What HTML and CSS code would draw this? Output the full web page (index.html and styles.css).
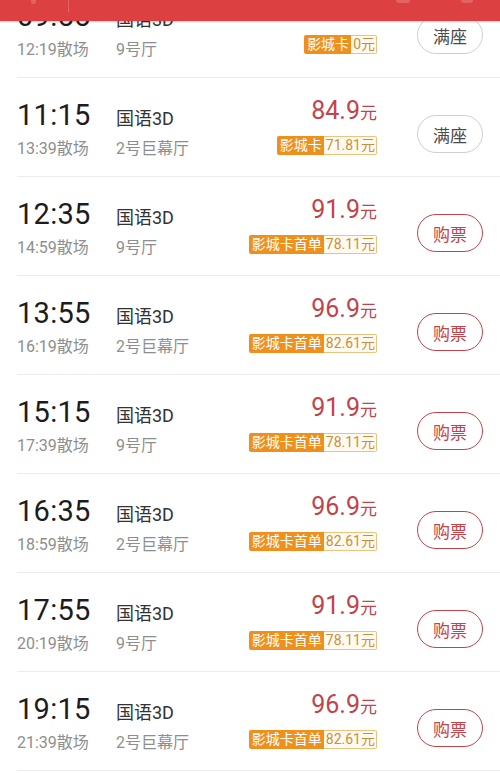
FILE: index.html
```html
<!DOCTYPE html>
<html lang="zh-CN">
<head>
    <meta charset="UTF-8">
    <meta name="viewport" content="width=device-width, initial-scale=1.0">
    <title>选座购票</title>
    <link rel="stylesheet" href="styles.css">
</head>
<body>

<div class="topbar">
    <span class="bar-mark mark-a"></span>
    <span class="bar-line"></span>
    <span class="bar-mark mark-b"></span>
    <span class="bar-mark mark-c"></span>
</div>

<ul class="shows">
    <li class="show">
        <div class="main">
            <span class="start">09:55</span><span class="lang">国语3D</span>
            <span class="end">12:19散场</span><span class="hall">9号厅</span>
        </div>
        <div class="price">
            <p class="amount">&nbsp;</p>
            <p class="card"><span class="card-name">影城卡</span><span class="card-val">0元</span></p>
        </div>
        <button class="btn full">满座</button>
    </li>
    <li class="show">
        <div class="main">
            <span class="start">11:15</span><span class="lang">国语3D</span>
            <span class="end">13:39散场</span><span class="hall">2号巨幕厅</span>
        </div>
        <div class="price">
            <p class="amount">84.9<small>元</small></p>
            <p class="card"><span class="card-name">影城卡</span><span class="card-val">71.81元</span></p>
        </div>
        <button class="btn full">满座</button>
    </li>
    <li class="show">
        <div class="main">
            <span class="start">12:35</span><span class="lang">国语3D</span>
            <span class="end">14:59散场</span><span class="hall">9号厅</span>
        </div>
        <div class="price">
            <p class="amount">91.9<small>元</small></p>
            <p class="card"><span class="card-name">影城卡首单</span><span class="card-val">78.11元</span></p>
        </div>
        <button class="btn buy">购票</button>
    </li>
    <li class="show">
        <div class="main">
            <span class="start">13:55</span><span class="lang">国语3D</span>
            <span class="end">16:19散场</span><span class="hall">2号巨幕厅</span>
        </div>
        <div class="price">
            <p class="amount">96.9<small>元</small></p>
            <p class="card"><span class="card-name">影城卡首单</span><span class="card-val">82.61元</span></p>
        </div>
        <button class="btn buy">购票</button>
    </li>
    <li class="show">
        <div class="main">
            <span class="start">15:15</span><span class="lang">国语3D</span>
            <span class="end">17:39散场</span><span class="hall">9号厅</span>
        </div>
        <div class="price">
            <p class="amount">91.9<small>元</small></p>
            <p class="card"><span class="card-name">影城卡首单</span><span class="card-val">78.11元</span></p>
        </div>
        <button class="btn buy">购票</button>
    </li>
    <li class="show">
        <div class="main">
            <span class="start">16:35</span><span class="lang">国语3D</span>
            <span class="end">18:59散场</span><span class="hall">2号巨幕厅</span>
        </div>
        <div class="price">
            <p class="amount">96.9<small>元</small></p>
            <p class="card"><span class="card-name">影城卡首单</span><span class="card-val">82.61元</span></p>
        </div>
        <button class="btn buy">购票</button>
    </li>
    <li class="show">
        <div class="main">
            <span class="start">17:55</span><span class="lang">国语3D</span>
            <span class="end">20:19散场</span><span class="hall">9号厅</span>
        </div>
        <div class="price">
            <p class="amount">91.9<small>元</small></p>
            <p class="card"><span class="card-name">影城卡首单</span><span class="card-val">78.11元</span></p>
        </div>
        <button class="btn buy">购票</button>
    </li>
    <li class="show">
        <div class="main">
            <span class="start">19:15</span><span class="lang">国语3D</span>
            <span class="end">21:39散场</span><span class="hall">2号巨幕厅</span>
        </div>
        <div class="price">
            <p class="amount">96.9<small>元</small></p>
            <p class="card"><span class="card-name">影城卡首单</span><span class="card-val">82.61元</span></p>
        </div>
        <button class="btn buy">购票</button>
    </li>
</ul>

</body>
</html>
```

FILE: styles.css
```css
body {
    margin: 0;
    background-color: #fff;
    font-family: Roboto, "Noto Sans CJK SC", sans-serif;
    color: #222;
    overflow: hidden;
}
.topbar {
    position: fixed;
    top: 0;
    left: 0;
    right: 0;
    height: 21px;
    background-color: #dd4040;
    box-shadow: 0 1px 2px rgba(0, 0, 0, 0.18);
    z-index: 2;
}
.bar-mark {
    position: absolute;
    top: 0;
    height: 4px;
    background-color: rgba(255, 255, 255, 0.18);
    border-radius: 0 0 3px 3px;
}
.mark-a { left: 31px; width: 5px; }
.mark-b { left: 396px; width: 14px; height: 3px; }
.mark-c { left: 461px; width: 12px; height: 3px; border-radius: 0 0 6px 6px; }
.bar-line {
    position: absolute;
    top: 0;
    left: 68px;
    width: 1px;
    height: 12px;
    background-color: rgba(255, 255, 255, 0.2);
}
.shows {
    list-style: none;
    margin: -21px 0 0;
    padding: 0;
}
.show {
    display: flex;
    align-items: flex-start;
    height: 98px;
    margin-left: 17px;
    padding-right: 17px;
    border-bottom: 1px solid #ececec;
}
.main {
    flex: 1;
    display: grid;
    grid-template-columns: 99px auto;
    align-items: baseline;
    row-gap: 8px;
    padding-top: 21px;
}
.start {
    font-size: 29px;
    line-height: 32px;
    color: #1c1c1c;
    letter-spacing: 0.3px;
}
.lang {
    font-size: 18px;
    line-height: 24px;
    color: #333;
}
.end, .hall {
    font-size: 16px;
    line-height: 20px;
    color: #8e8e8e;
}
.price {
    padding-top: 18px;
    text-align: right;
}
.price p {
    margin: 0;
}
.amount {
    font-size: 25px;
    line-height: 30px;
    color: #c2434a;
}
.amount small {
    font-size: 17px;
}
.card {
    display: flex;
    justify-content: flex-end;
    margin-top: 8px !important;
    font-size: 14px;
    line-height: 17px;
}
.card-name {
    background-color: #f0901c;
    color: #fff;
    padding: 1px 2px 0 3px;
    border-radius: 2px 0 0 2px;
}
.card-val {
    background-color: #fffaf0;
    color: #c98f3a;
    border: 1px solid #ebc37c;
    border-left: none;
    padding: 0 1px 0 2px;
    border-radius: 0 2px 2px 0;
}
.btn {
    margin: 37px 0 0 40px;
    width: 66px;
    height: 38px;
    border-radius: 19px;
    background-color: #fff;
    font-family: Roboto, "Noto Sans CJK SC", sans-serif;
    font-size: 17px;
    padding: 0;
}
.full {
    border: 1px solid #cfcfcf;
    color: #4a4a4a;
}
.buy {
    border: 1px solid #c2434a;
    color: #c2434a;
}
```
